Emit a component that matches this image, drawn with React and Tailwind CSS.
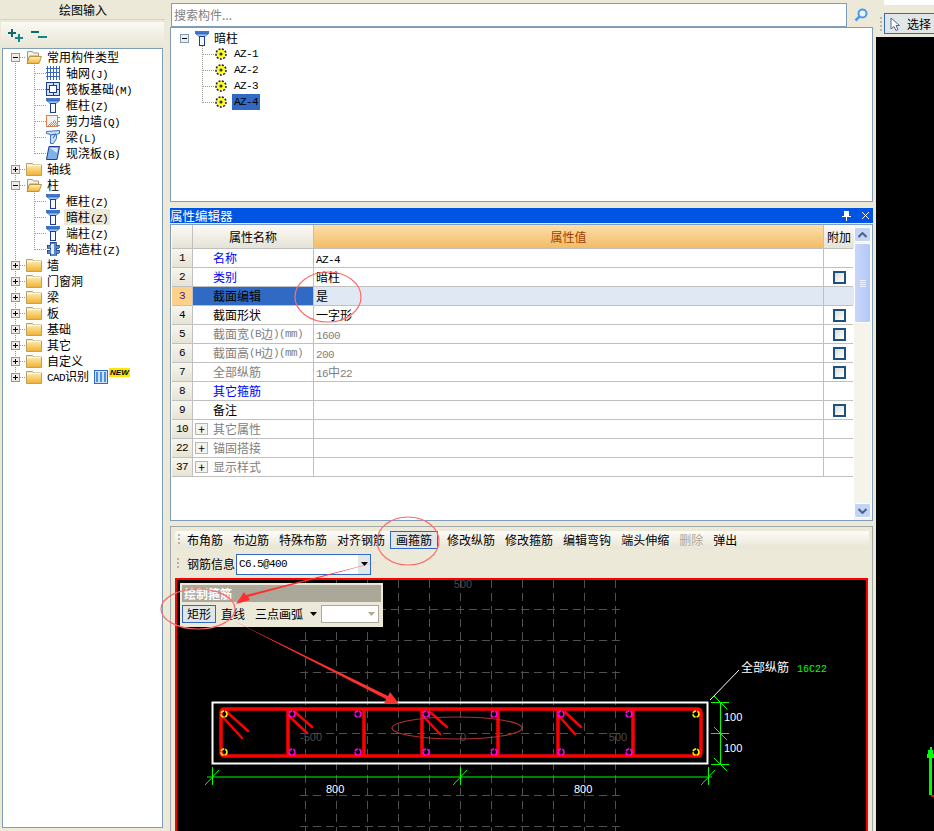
import React from "react";

const cjk = "font-['Noto_Sans_CJK_SC','Liberation_Sans',sans-serif]";
const mono = "font-['Liberation_Mono',monospace] text-[11px] tracking-[-0.6px]";

function Txt({ children }) {
  const parts = String(children).split(/([\x21-\x7e]+)/);
  return (
    <>
      {parts.map((p, i) =>
        /^[\x21-\x7e]+$/.test(p) ? (
          <span key={i} className={mono}>{p}</span>
        ) : (
          <span key={i}>{p}</span>
        )
      )}
    </>
  );
}

const Folder = ({ open }) => (
  <svg width="16" height="14" viewBox="0 0 16 14" className="shrink-0">
    <defs>
      <linearGradient id="fg" x1="0" y1="0" x2="0" y2="1">
        <stop offset="0" stopColor="#fff3c0" />
        <stop offset="1" stopColor="#f0b030" />
      </linearGradient>
    </defs>
    {open ? (
      <>
        <path d="M1.5 1.5h5l1 1.5h5v3h-9l-2 7z" fill="#f8f4e4" stroke="#a89a70" />
        <path d="M3.5 6.5h12l-2.5 7H1z" fill="url(#fg)" stroke="#b8964c" />
      </>
    ) : (
      <>
        <path d="M0.5 1.5h6l1.5 1.5h7.5v10.5H0.5z" fill="url(#fg)" stroke="#b8a070" />
        <path d="M1 3.5h14" stroke="#fffbe8" />
      </>
    )}
  </svg>
);

const ColIcon = () => (
  <svg width="14" height="15" viewBox="0 0 14 15" className="shrink-0">
    <rect x="0" y="0" width="14" height="3" fill="#3f76cc" />
    <path d="M1 3h12l-3 2.5H4z" fill="#9cc4f0" stroke="#2c5cb0" strokeWidth="0.6" />
    <rect x="4.5" y="5.5" width="5" height="9" fill="#f4f8ff" stroke="#1b3d96" />
  </svg>
);

const AxisIcon = () => (
  <svg width="14" height="14" viewBox="0 0 14 14" className="shrink-0" shapeRendering="crispEdges">
    {[1, 4, 7, 10, 13].map((v) => (
      <path key={v} d={`M${v}.5 0v14`} stroke="#3a66b8" />
    ))}
    {[2, 6, 10].map((v) => (
      <path key={v} d={`M0 ${v}.5h14`} stroke="#3a66b8" />
    ))}
  </svg>
);

const RaftIcon = () => (
  <svg width="14" height="14" viewBox="0 0 14 14" className="shrink-0" shapeRendering="crispEdges">
    <rect x="0.5" y="0.5" width="13" height="13" fill="#cfe0f6" stroke="#1d3f8c" />
    <rect x="3.5" y="3.5" width="7" height="7" fill="#fff" stroke="#1d3f8c" />
    <path d="M7 0v3M7 11v3M0 7h3M11 7h3" stroke="#1d3f8c" />
  </svg>
);

const WallIcon = () => (
  <svg width="14" height="14" viewBox="0 0 14 14" className="shrink-0" shapeRendering="crispEdges">
    <rect x="0.5" y="1.5" width="11" height="11" fill="#f4f0ea" stroke="#d88050" />
    <path d="M2 11h9M3 10h8M4 9h7M5 8h6M7 7h4M8 6h2" stroke="#9a9a9a" strokeDasharray="1 1" />
    <path d="M12 3h2M12 7h2M12 11h2" stroke="#e08030" />
  </svg>
);

const BeamIcon = () => (
  <svg width="14" height="14" viewBox="0 0 14 14" className="shrink-0">
    <path d="M0.5 1.5l13-1v3l-3 1v4l-3 5h-3v-9l-4-1z" fill="#c8dcf4" stroke="#3f76cc" />
    <path d="M5 5l5-1M7 8l3-4" stroke="#2c5cb0" />
  </svg>
);

const SlabIcon = () => (
  <svg width="14" height="14" viewBox="0 0 14 14" className="shrink-0">
    <path d="M3 0.5h10.5l-2.5 13H0.5z" fill="#7fb0ec" stroke="#1b3d96" />
    <path d="M4 2h8l-1 5z" fill="#d8e8fa" />
  </svg>
);

const StructIcon = () => (
  <svg width="14" height="14" viewBox="0 0 14 14" className="shrink-0" shapeRendering="crispEdges">
    <path d="M4 0h6v3h3v3h-3v2h3v3h-3v3H4v-3H1V8h3V6H1V3h3z" fill="#5a86c8" stroke="#1b3d96" strokeWidth="0.8" />
    <path d="M5 2h3v10H5z" fill="#e6eefa" />
  </svg>
);

const Gear = () => (
  <svg width="12" height="12" viewBox="0 0 12 12" className="shrink-0">
    <circle cx="6" cy="6" r="4.5" fill="#ffff20" />
    <circle cx="6" cy="6" r="5" fill="none" stroke="#222" strokeWidth="1.6" strokeDasharray="2 1.4" />
    <circle cx="6" cy="6" r="1.6" fill="#333" />
  </svg>
);

const Exp = ({ x, y, open }) => (
  <g shapeRendering="crispEdges">
    <rect x={x + 0.5} y={y + 0.5} width="8" height="8" fill="#f0eee4" stroke="#7f9db9" />
    <path d={`M${x + 2} ${y + 4.5}h5`} stroke="#000" />
    {!open && <path d={`M${x + 4.5} ${y + 2}v5`} stroke="#000" />}
  </g>
);

const dot = { stroke: "#9a9a90", strokeDasharray: "1 1", shapeRendering: "crispEdges" };

const treeRows = [
  { t: "常用构件类型", ex: "-", first: true },
  { t: "轴网(J)", icon: <AxisIcon />, sub: true },
  { t: "筏板基础(M)", icon: <RaftIcon />, sub: true },
  { t: "框柱(Z)", icon: <ColIcon />, sub: true },
  { t: "剪力墙(Q)", icon: <WallIcon />, sub: true },
  { t: "梁(L)", icon: <BeamIcon />, sub: true },
  { t: "现浇板(B)", icon: <SlabIcon />, sub: true, last: true },
  { t: "轴线", ex: "+" },
  { t: "柱", ex: "-" },
  { t: "框柱(Z)", icon: <ColIcon />, sub: true },
  { t: "暗柱(Z)", icon: <ColIcon />, sub: true, sel: true },
  { t: "端柱(Z)", icon: <ColIcon />, sub: true },
  { t: "构造柱(Z)", icon: <StructIcon />, sub: true, last: true },
  { t: "墙", ex: "+" },
  { t: "门窗洞", ex: "+" },
  { t: "梁", ex: "+" },
  { t: "板", ex: "+" },
  { t: "基础", ex: "+" },
  { t: "其它", ex: "+" },
  { t: "自定义", ex: "+" },
  { t: "CAD识别", ex: "+", cad: true, end: true },
];

function TreeRow({ r }) {
  if (r.sub) {
    return (
      <div className="flex h-4 items-center">
        <svg width="43" height="16" className="shrink-0">
          <path d="M12.5 0v16" style={dot} />
          <path d={r.last ? "M31.5 0v8.5" : "M31.5 0v16"} style={dot} />
          <path d="M31.5 8.5h11" style={dot} />
        </svg>
        {r.icon}
        <div className={`ml-[4px] h-4 px-[2px] leading-4 whitespace-nowrap ${r.sel ? "bg-[#ece9d8]" : ""}`}>
          <Txt>{r.t}</Txt>
        </div>
      </div>
    );
  }
  return (
    <div className="flex h-4 items-center">
      <svg width="23" height="16" className="shrink-0">
        <path d={r.first ? "M12.5 8v8" : r.end ? "M12.5 0v8" : "M12.5 0v16"} style={dot} />
        <path d="M12.5 8.5h10" style={dot} />
        <Exp x={8} y={4} open={r.ex === "-"} />
      </svg>
      <Folder open={r.ex === "-"} />
      <div className="ml-[5px] leading-4 whitespace-nowrap">
        <Txt>{r.t}</Txt>
      </div>
      {r.cad && (
        <div className="ml-[5px] flex items-start">
          <svg width="14" height="14" viewBox="0 0 14 14" shapeRendering="crispEdges">
            <rect x="0.5" y="0.5" width="13" height="13" fill="#cfe4fa" stroke="#2c6cc8" />
            <path d="M2 2h2v10H2zM6 2h2v10H6zM10 2h2v10h-2z" fill="#4c90e0" />
          </svg>
          <span className="mt-[-2px] ml-[1px] bg-[#ffe800] px-[1px] font-['Liberation_Sans',sans-serif] text-[8px] leading-[9px] font-bold italic text-black">
            NEW
          </span>
        </div>
      )}
    </div>
  );
}

const Check = () => (
  <div className="mx-auto mt-[3px] h-[13px] w-[13px] border-2 border-[#1c5180] bg-gradient-to-br from-[#dcdcd6] to-white" />
);

const props = [
  { n: "1", name: "名称", val: "AZ-4", c: "blue" },
  { n: "2", name: "类别", val: "暗柱", c: "blue", chk: true },
  { n: "3", name: "截面编辑", val: "是", sel: true },
  { n: "4", name: "截面形状", val: "一字形", chk: true },
  { n: "5", name: "截面宽(B边)(mm)", val: "1600", c: "gray", chk: true },
  { n: "6", name: "截面高(H边)(mm)", val: "200", c: "gray", chk: true },
  { n: "7", name: "全部纵筋", val: "16中22", c: "gray", chk: true },
  { n: "8", name: "其它箍筋", val: "", c: "blue" },
  { n: "9", name: "备注", val: "", chk: true },
  { n: "10", name: "其它属性", val: "", c: "gray", plus: true },
  { n: "22", name: "锚固搭接", val: "", c: "gray", plus: true },
  { n: "37", name: "显示样式", val: "", c: "gray", plus: true },
];

function PropRow({ p }) {
  const color = p.c === "blue" ? "text-[#0000ff]" : p.c === "gray" ? "text-[#808080]" : "text-black";
  return (
    <div className="flex h-[19px] border-b border-[#c0c0c0] leading-[18px]">
      <div
        className={`w-[21px] shrink-0 border-r border-[#c0c0c0] text-center font-['Liberation_Mono',monospace] text-[11px] tracking-[-0.6px] ${
          p.sel ? "bg-[#fdd08c] text-[#5a1080]" : "bg-gradient-to-b from-[#f7f6ef] to-[#e6e3d6]"
        }`}
      >
        {p.n}
      </div>
      <div
        className={`flex w-[121px] shrink-0 items-center border-r border-[#c0c0c0] whitespace-nowrap ${
          p.sel ? "bg-[#316ac5]" : ""
        } ${p.plus ? "pl-[2px]" : "pl-[20px]"} ${color} ${p.sel ? "text-black" : ""}`}
      >
        {p.plus && (
          <div className="mr-[5px] flex h-[12px] w-[13px] items-center justify-center border border-[#b8b8b0] bg-[#f4f3ec] text-[12px] leading-none text-black">
            +
          </div>
        )}
        <Txt>{p.name}</Txt>
      </div>
      <div className={`w-[510px] shrink-0 border-r border-[#c0c0c0] pl-[2px] ${p.sel ? "bg-[#e0e8f4]" : ""} ${p.c === "gray" ? "text-[#808080]" : "text-black"}`}>
        <Txt>{p.val}</Txt>
      </div>
      <div className={`w-[30px] shrink-0 ${p.sel ? "bg-[#e0e8f4]" : ""}`}>{p.chk && <Check />}</div>
    </div>
  );
}

const Grip = ({ h = 14 }) => (
  <svg width="3" height={h} className="shrink-0" shapeRendering="crispEdges">
    {Array.from({ length: Math.floor(h / 4) }).map((_, i) => (
      <rect key={i} x="0" y={i * 4 + 1} width="2" height="2" fill="#b8b4a0" />
    ))}
  </svg>
);

const tools = ["布角筋", "布边筋", "特殊布筋", "对齐钢筋", "画箍筋", "修改纵筋", "修改箍筋", "编辑弯钩", "端头伸缩", "删除", "弹出"];

function Tool({ t }) {
  if (t === "画箍筋") {
    return (
      <div className="mr-[4px] h-[18px] border border-[#316ac5] bg-[#e1e6e8] px-[5px] leading-[16px]">{t}</div>
    );
  }
  return <div className={`h-[18px] px-[5px] leading-[18px] ${t === "删除" ? "text-[#aca899]" : "text-black"}`}>{t}</div>;
}

const vx = [305, 336, 367, 398, 429, 460, 491, 522, 553, 584, 615];
const hy = [609, 640, 672, 733, 795, 826];
const bars = [288, 364, 422, 498, 558, 633];
const hooks = [
  [221, 715, 242, 738],
  [227, 712, 248, 731],
  [288, 715, 307, 733],
  [295, 712, 312, 727],
  [422, 715, 440, 734],
  [430, 712, 447, 727],
  [558, 715, 575, 734],
  [565, 712, 581, 727],
];
const rebarX = [224, 292, 358, 426, 494, 561, 629, 696];

function Drawing() {
  const G = "#00ff00";
  return (
    <svg width="689" height="254" viewBox="177 580 689 254" className="block" fontFamily="'Liberation Sans',sans-serif">
      <g stroke="#505050" strokeDasharray="8 5" shapeRendering="crispEdges">
        {vx.map((x) => (
          <path key={x} d={`M${x}.5 580V831`} />
        ))}
        {hy.map((y) => (
          <path key={y} d={`M300 ${y}.5H620`} />
        ))}
      </g>
      <g fill="#4a4a4a" fontSize="11" textAnchor="middle">
        <text x="463" y="588">500</text>
        <text x="311" y="741">-500</text>
        <text x="463" y="741">0</text>
        <text x="618" y="741">500</text>
      </g>
      <rect x="212.5" y="702.5" width="495" height="61" fill="none" stroke="#fff" strokeWidth="2" />
      <g stroke="#ff0000" strokeWidth="3.5" fill="none" strokeLinecap="round">
        <path d="M224 709H697Q701 709 701 713V752Q701 756 697 756H224Q221 756 221 752V713Q221 709 224 709Z" />
        {bars.map((x) => (
          <path key={x} d={`M${x} 710V755`} />
        ))}
        {hooks.map((h, i) => (
          <path key={i} d={`M${h[0]} ${h[1]}L${h[2]} ${h[3]}`} strokeWidth="2.5" />
        ))}
      </g>
      {rebarX.map((x, i) => {
        const c = i === 0 || i === 7 ? "#ffff00" : "#ff00ff";
        return (
          <g key={x} fill="none" stroke={c} strokeWidth="1.5" strokeDasharray="4 1">
            <circle cx={x} cy="714" r="3" />
            <circle cx={x} cy="752" r="3" />
          </g>
        );
      })}
      <path d="M207 777H712" stroke={G} strokeWidth="1" fill="none" />
      <g stroke={G} fill="none" shapeRendering="crispEdges">
        <path d="M212.5 767V785M460.5 767V785M708.5 767V785" />
        <path d="M720.5 702V764" />
        <path d="M711 702.5H729M711 733.5H729M711 764.5H729" />
      </g>
      <g stroke={G} fill="none">
        <path d="M205 785L219 770M453 785L467 770M701 785L715 770" />
        <path d="M714 696L727 709M714 727L727 740M714 758L727 771" />
      </g>
      <path d="M710 700L739 670" stroke="#fff" fill="none" />
      <g fill="#fff" fontSize="11">
        <text x="326" y="793">800</text>
        <text x="574" y="793">800</text>
        <text x="724" y="721">100</text>
        <text x="724" y="752">100</text>
      </g>
      <text x="741" y="672" fill="#fff" fontSize="12" fontFamily="'Noto Sans CJK SC',sans-serif">全部纵筋</text>
      <text x="797" y="672" fill="#00ff00" fontSize="10" fontFamily="'Liberation Mono',monospace">16C22</text>
    </svg>
  );
}

export default function App() {
  return (
    <div className={`relative flex h-[831px] w-[934px] overflow-hidden bg-[#ece9d8] text-[12px] text-black ${cjk}`}>
      {/* left */}
      <div className="flex w-[165px] shrink-0 flex-col">
        <div className="flex h-[20px] shrink-0 items-center justify-center border-b border-[#d8d4c0] pl-[1px] text-[12px]">绘图输入</div>
        <div className="mx-[1px] mt-[2px] flex h-[26px] shrink-0 items-center gap-[8px] bg-gradient-to-b from-[#faf9f3] to-[#e8e5d4] pl-[6px]">
          <svg width="16" height="14" viewBox="0 0 16 14" shapeRendering="crispEdges">
            <path d="M1 5h8M5 1v8" stroke="#0c6a6a" strokeWidth="2" />
            <path d="M8 10h8M12 6v8" stroke="#0c8a8a" strokeWidth="2" />
          </svg>
          <svg width="16" height="14" viewBox="0 0 16 14" shapeRendering="crispEdges">
            <path d="M0 4h8" stroke="#0c6a6a" strokeWidth="2" />
            <path d="M7 9h9" stroke="#0c8a8a" strokeWidth="2" />
          </svg>
        </div>
        <div className="mx-[2px] h-[780px] shrink-0 border border-[#7f9db9] bg-white">
          {treeRows.map((r, i) => (
            <TreeRow key={i} r={r} />
          ))}
        </div>
      </div>

      {/* middle */}
      <div className="mr-[3px] ml-[5px] flex w-[703px] shrink-0 flex-col">
        <div className="mt-[3px] flex h-[24px] shrink-0 pl-[1px]">
          <div className="h-[24px] w-[676px] border border-[#7f9db9] bg-white pl-[2px] leading-[22px] text-[#808080]">搜索构件...</div>
          <div className="ml-[3px] flex h-[23px] w-[21px] items-center justify-center">
            <svg width="14" height="14" viewBox="0 0 14 14">
              <circle cx="8.5" cy="5.5" r="4" fill="#e8f4ff" stroke="#4a9ae8" strokeWidth="2" />
              <path d="M5.5 8.5L1.5 12.5" stroke="#4a9ae8" strokeWidth="2.5" />
            </svg>
          </div>
        </div>
        <div className="h-[175px] shrink-0 border border-[#7f9db9] bg-white pt-[2px] pl-[6px]">
          <div className="flex h-4 items-center">
            <svg width="18" height="16" className="shrink-0">
              <Exp x={3} y={4} open />
            </svg>
            <ColIcon />
            <div className="ml-[5px]">暗柱</div>
          </div>
          {["AZ-1", "AZ-2", "AZ-3", "AZ-4"].map((a, i) => (
            <div key={a} className="flex h-4 items-center">
              <svg width="38" height="16" className="shrink-0">
                <path d={i === 3 ? "M25.5 0v8.5" : "M25.5 0v16"} style={dot} />
                <path d="M25.5 8.5h11" style={dot} />
              </svg>
              <Gear />
              <div className={`ml-[5px] h-4 px-[2px] leading-4 ${mono} ${i === 3 ? "bg-[#316ac5]" : ""}`}>{a}</div>
            </div>
          ))}
        </div>

        <div className="mt-[6px] flex h-[15px] shrink-0 items-center justify-between bg-[#0054e3] pr-[3px] text-[12.5px] leading-[15px] text-white">
          <span>属性编辑器</span>
          <span className="flex items-center gap-[10px]">
            <svg width="9" height="10" viewBox="0 0 9 10" shapeRendering="crispEdges">
              <path d="M2 0h5v5h2v1H5v4H4V6H0V5h2z" fill="#fff" />
            </svg>
            <svg width="9" height="9" viewBox="0 0 9 9">
              <path d="M1 1L8 8M8 1L1 8" stroke="#fff" />
            </svg>
          </span>
        </div>

        <div className="mt-[1px] flex h-[297px] shrink-0 border border-[#7f9db9] bg-white">
          <div className="w-[682px] shrink-0 pl-[1px]">
            <div className="flex h-[24px] border-b border-[#c0c0c0]">
              <div className="w-[21px] shrink-0 border-r border-[#c0c0c0] bg-gradient-to-b from-[#fbfaf5] to-[#e6e3d6]" />
              <div className="flex w-[121px] shrink-0 items-center justify-center border-r border-[#c0c0c0] bg-gradient-to-b from-[#fbfaf5] to-[#e6e3d6]">属性名称</div>
              <div className="flex w-[510px] shrink-0 items-center justify-center border-r border-[#c0c0c0] bg-gradient-to-b from-[#fbdfa8] to-[#f2bc66] text-[#a04000]">属性值</div>
              <div className="flex w-[30px] shrink-0 items-center justify-center bg-gradient-to-b from-[#fbfaf5] to-[#e6e3d6]">附加</div>
            </div>
            {props.map((p) => (
              <PropRow key={p.n} p={p} />
            ))}
          </div>
          <div className="ml-[1px] flex w-[17px] shrink-0 flex-col bg-[#f5f4ec] py-[2px]">
            <div className="flex h-[15px] items-center justify-center rounded-[2px] border border-white bg-[#c4d4f8]">
              <svg width="9" height="6" viewBox="0 0 9 6"><path d="M0.5 5L4.5 1L8.5 5" fill="none" stroke="#4d6185" strokeWidth="2" /></svg>
            </div>
            <div className="mt-[1px] flex h-[80px] flex-col items-center justify-center gap-[1px] rounded-[2px] border border-white bg-gradient-to-r from-[#c8d6fb] to-[#b4c8f6]">
              <div className="h-px w-[6px] bg-[#eef3ff]" />
              <div className="h-px w-[6px] bg-[#eef3ff]" />
              <div className="h-px w-[6px] bg-[#eef3ff]" />
              <div className="h-px w-[6px] bg-[#eef3ff]" />
            </div>
            <div className="flex-1" />
            <div className="flex h-[15px] items-center justify-center rounded-[2px] border border-white bg-[#c4d4f8]">
              <svg width="9" height="6" viewBox="0 0 9 6"><path d="M0.5 1L4.5 5L8.5 1" fill="none" stroke="#4d6185" strokeWidth="2" /></svg>
            </div>
          </div>
        </div>

        <div className="mt-[5px] h-[320px] shrink-0 border border-[#a0a8a8] pl-[4px]">
          <div className="mt-[4px] flex h-[18px] w-[694px] items-center rounded-l-[3px] bg-gradient-to-b from-[#fdfcf8] to-[#e8e5d4] pl-[3px]">
            <Grip />
            <div className="flex items-center pl-[1px]">
              {tools.map((t) => (
                <Tool key={t} t={t} />
              ))}
            </div>
          </div>
          <div className="mt-[4px] flex h-[22px] items-center pl-[2px]">
            <Grip />
            <span className="ml-[7px]">钢筋信息</span>
            <div className="ml-[1px] flex h-[21px] w-[135px] border border-[#316ac5] bg-white pl-[2px]">
              <span className={`flex-1 leading-[19px] ${mono}`}>C6.5@400</span>
              <span className="flex w-[12px] items-center justify-center bg-[#e1e6e8]">
                <svg width="7" height="4"><path d="M0 0h7L3.5 4z" fill="#000" /></svg>
              </span>
            </div>
          </div>
          <div className="relative mt-[3px] h-[258px] w-[693px] border-2 border-[#ff0000] bg-black">
            <Drawing />
            <div className="absolute top-[3px] left-[3px] h-[44px] w-[203px] border-2 border-[#ece9d8] bg-[#ece9d8]">
              <div className="h-[17px] bg-[#aca899] pl-[2px] leading-[17px] font-bold text-white">绘制箍筋</div>
              <div className="mt-[2px] flex h-[19px] items-center">
                <div className="h-[18px] w-[34px] border border-[#316ac5] bg-[#e1e6e8] text-center leading-[16px]">矩形</div>
                <span className="ml-[5px]">直线</span>
                <span className="ml-[10px]">三点画弧</span>
                <svg width="7" height="4" className="ml-[7px]"><path d="M0 0h7L3.5 4z" fill="#000" /></svg>
                <div className="ml-[4px] flex h-[18px] w-[58px] items-center justify-end border border-[#aca899] bg-white pr-[3px]">
                  <svg width="7" height="4"><path d="M0 0h7L3.5 4z" fill="#aca899" /></svg>
                </div>
              </div>
            </div>
          </div>
        </div>
      </div>

      {/* right */}
      <div className="flex min-w-0 flex-1 flex-col">
        <div className="flex h-[37px] shrink-0 flex-col pl-[8px]">
          <div className="h-[5px] bg-white" />
          <div className="mt-[8px] flex h-[21px] items-center">
            <div className="mr-[1px] ml-[-4px]"><Grip h={16} /></div>
            <div className="flex h-[21px] flex-1 items-center gap-[7px] border border-r-0 border-[#316ac5] bg-[#e1e6e8] pl-[5px]">
              <svg width="10" height="14" viewBox="0 0 10 14">
                <path d="M1 1v11l3-2.5 2 4 2-1-2-4h3.5z" fill="#fff" stroke="#556688" />
              </svg>
              <span className="whitespace-nowrap">选择</span>
            </div>
          </div>
        </div>
        <div className="relative flex-1 bg-black">
          <svg width="7" height="50" viewBox="0 0 7 50" className="absolute top-[710px] right-0" shapeRendering="crispEdges">
            <path d="M3 0h2v3h1v4h1v4H5v37H2V11H0V7h1V3h2z" fill="#00ff00" />
            <rect x="4" y="48" width="3" height="2" fill="#ff0000" />
          </svg>
        </div>
      </div>

      {/* hand-drawn notes */}
      <svg width="934" height="831" className="pointer-events-none absolute top-0 left-0">
        <g fill="none" stroke="#ff6a6a" strokeWidth="1.2">
          <ellipse cx="328" cy="297" rx="33" ry="25" />
          <ellipse cx="408" cy="541" rx="31" ry="24" />
          <ellipse cx="198" cy="609" rx="37" ry="20" />
        </g>
        <ellipse cx="457" cy="728" rx="65" ry="11" fill="none" stroke="#b03030" strokeWidth="1.2" />
        <path d="M377 562L248 597L250 600L236 604L244 592L246 595Z" fill="#ff3030" />
        <path d="M234 621L388 696L390 692L399 704L384 704L386 699Z" fill="#ff3030" />
      </svg>
    </div>
  );
}
